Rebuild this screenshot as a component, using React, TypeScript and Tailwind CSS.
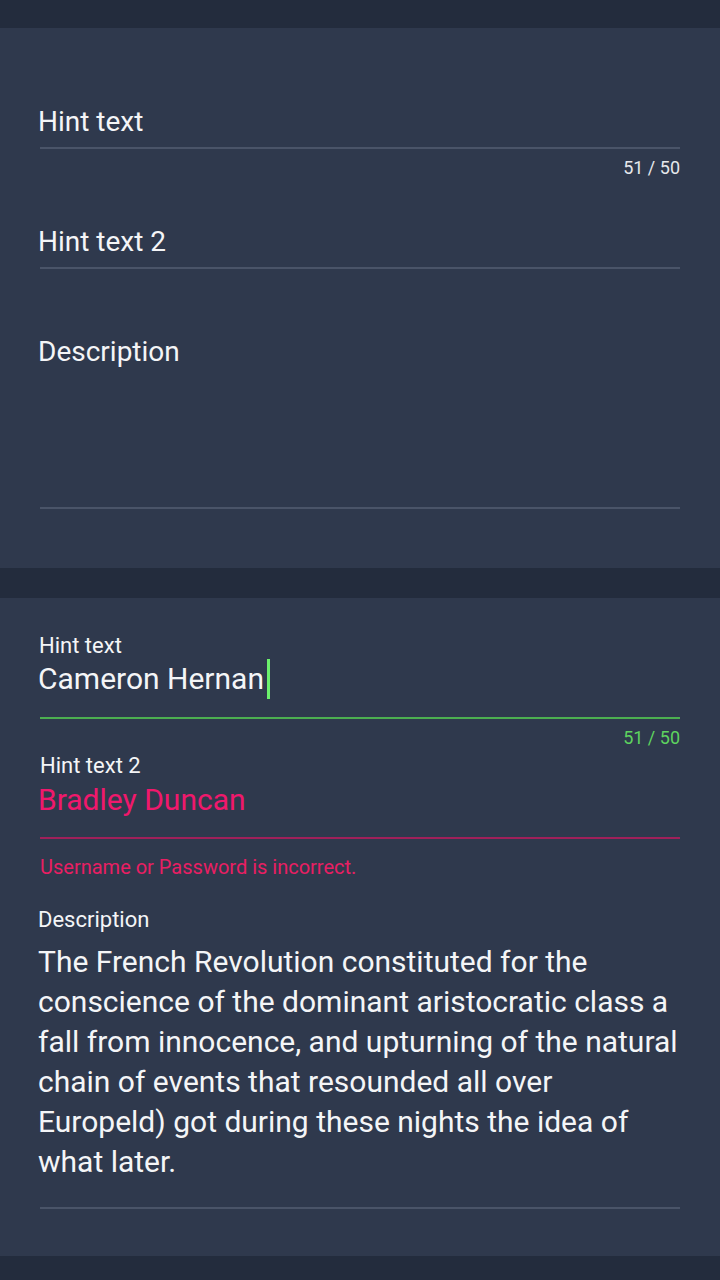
import React from "react";

const font = { fontFamily: "Roboto, 'Noto Sans', sans-serif" };

const App: React.FC = () => {
  return (
    <div className="min-h-[1280px] w-[720px] bg-[#232c3d] pt-[28px] text-white" style={font}>
      {/* Empty fields */}
      <div className="bg-[#2f394d] px-10 pt-[77px] pb-[59px]">
        <div className="-ml-0.5 h-8 text-[28px] leading-[34px] text-[#f4f5f7]">Hint text</div>
        <div className="mt-[10px] h-[2px] bg-[#4a5468]" />
        <div className="mt-2 h-5 text-right text-[18px] leading-[21px] text-[#e6e8ec]">51 / 50</div>

        <div className="-ml-0.5 mt-[48px] h-8 text-[28px] leading-[34px] text-[#f4f5f7]">Hint text 2</div>
        <div className="mt-[10px] h-[2px] bg-[#4a5468]" />

        <div className="-ml-0.5 mt-[66px] h-8 text-[28px] leading-[34px] text-[#f4f5f7]">Description</div>
        <div className="mt-[140px] h-[2px] bg-[#4a5468]" />
      </div>

      {/* Filled fields */}
      <div className="mt-[30px] bg-[#2f394d] px-10 pt-[35px] pb-[47px]">
        <div className="-ml-px h-6 text-[22px] leading-[26px] text-[#f4f5f7]">Hint text</div>
        <div className="-ml-0.5 mt-[6px] flex h-8 items-center text-[30px] leading-[34px] text-[#f4f5f7]">
          <span>Cameron Hernan</span>
          <span className="ml-[3px] h-10 w-[3px] bg-[#6cf06c]" />
        </div>
        <div className="mt-[22px] h-[2px] bg-[#4caf50]" />
        <div className="mt-2 h-5 text-right text-[18px] leading-[21px] text-[#5ed35f]">51 / 50</div>

        <div className="mt-[6px] h-6 text-[22px] leading-[26px] text-[#f4f5f7]">Hint text 2</div>
        <div className="-ml-0.5 mt-[6px] h-8 text-[30px] leading-[34px] text-[#f0186c]">Bradley Duncan</div>
        <div className="mt-[22px] h-[2px] bg-[#a0205a]" />
        <div className="mt-[17px] h-[22px] text-[20px] leading-[23px] text-[#e91e63]">
          Username or Password is incorrect.
        </div>

        <div className="-ml-0.5 mt-[29px] h-6 text-[22px] leading-[26px] text-[#f4f5f7]">Description</div>
        <p className="-ml-0.5 -mr-1 mt-[11px] text-[30px] leading-10 text-[#f4f5f7]">
          The French Revolution constituted for the conscience of the dominant aristocratic class a
          fall from innocence, and upturning of the natural chain of events that resounded all over
          Europeld) got during these nights the idea of what later.
        </p>
        <div className="mt-[25px] h-[2px] bg-[#4a5468]" />
      </div>
    </div>
  );
};

export default App;
